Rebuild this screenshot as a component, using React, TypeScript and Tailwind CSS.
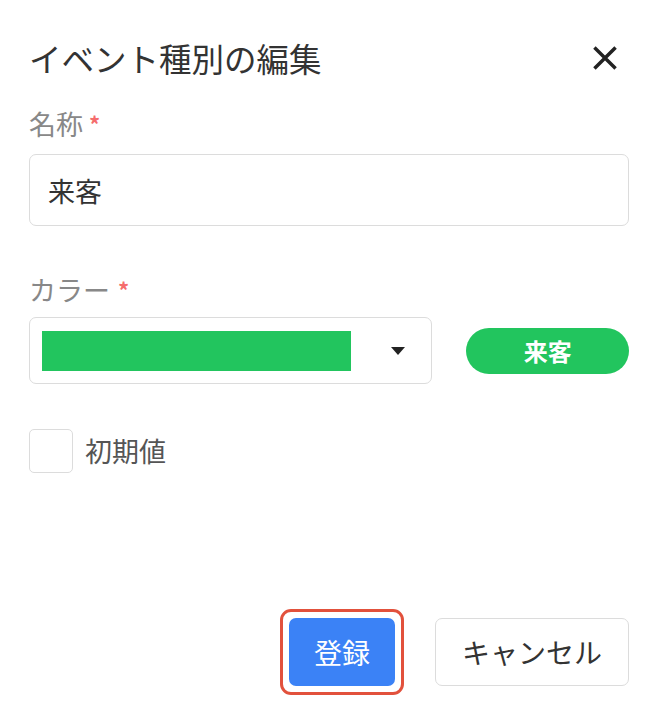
import React, { useState } from 'react';

export default function App() {
  const [name, setName] = useState('来客');
  const [isDefault, setIsDefault] = useState(false);

  return (
    <div
      className="w-[658px] min-h-[719px] bg-white px-[29px] pt-[38px] text-[#333]"
      style={{ fontFamily: '"Noto Sans CJK JP", "Noto Sans", sans-serif' }}
    >
      {/* Header */}
      <div className="flex items-center justify-between">
        <h2 className="text-[32.5px] leading-[40px] font-normal text-[#333]">イベント種別の編集</h2>
        <button className="mr-[8px] text-[#222]">
          <svg width="32" height="32" viewBox="0 0 24 24" fill="none" stroke="currentColor" strokeWidth="2.6" strokeLinecap="square">
            <path d="M5 5 L19 19 M19 5 L5 19" />
          </svg>
        </button>
      </div>

      {/* Name */}
      <div className="mt-[28px] flex items-start text-[27px] leading-[36px] text-[#888]">
        名称<span className="ml-[6px] mt-[6px] text-[22px] font-bold leading-[22px] text-[#f56c6c]">*</span>
      </div>
      <input
        value={name}
        onChange={(e) => setName(e.target.value)}
        className="mt-[12px] block h-[72px] w-[600px] rounded-[7px] border border-[#dcdcdc] px-[18px] text-[27px] text-[#333] outline-none"
      />

      {/* Color */}
      <div className="mt-[46px] flex items-start text-[27px] leading-[36px] text-[#888]">
        カラー<span className="ml-[8px] mt-[6px] text-[22px] font-bold leading-[22px] text-[#f56c6c]">*</span>
      </div>
      <div className="mt-[9px] flex items-center">
        <div className="flex h-[67px] w-[404px] items-center rounded-[7px] border border-[#dcdcdc] pl-[12px] pr-[26px]">
          <div className="h-[40px] w-[309px] bg-[#22c55e]" />
          <svg className="ml-auto" width="14" height="8" viewBox="0 0 14 8">
            <path d="M0 0 L14 0 L7 8 Z" fill="#222" />
          </svg>
        </div>
        <span className="ml-[34px] flex h-[46px] w-[163px] items-center justify-center rounded-full bg-[#22c55e] text-[24px] font-bold text-white">
          来客
        </span>
      </div>

      {/* Default */}
      <label className="mt-[45px] flex items-center gap-[12px]">
        <input
          type="checkbox"
          checked={isDefault}
          onChange={(e) => setIsDefault(e.target.checked)}
          className="h-[44px] w-[44px] appearance-none rounded-[5px] border border-[#dcdcdc] bg-white"
        />
        <span className="text-[27px] text-[#555]">初期値</span>
      </label>

      {/* Footer */}
      <div className="mt-[136px] flex justify-end gap-[31px]">
        <div className="rounded-[11px] border-[3px] border-[#e2513c] p-[6px]">
          <button className="flex h-[68px] w-[106px] items-center justify-center rounded-[7px] bg-[#3b82f6] text-[28px] text-white">
            登録
          </button>
        </div>
        <button className="mt-[9px] flex h-[68px] w-[194px] items-center justify-center rounded-[7px] border border-[#dcdcdc] bg-white text-[28px] text-[#333]">
          キャンセル
        </button>
      </div>
    </div>
  );
}
